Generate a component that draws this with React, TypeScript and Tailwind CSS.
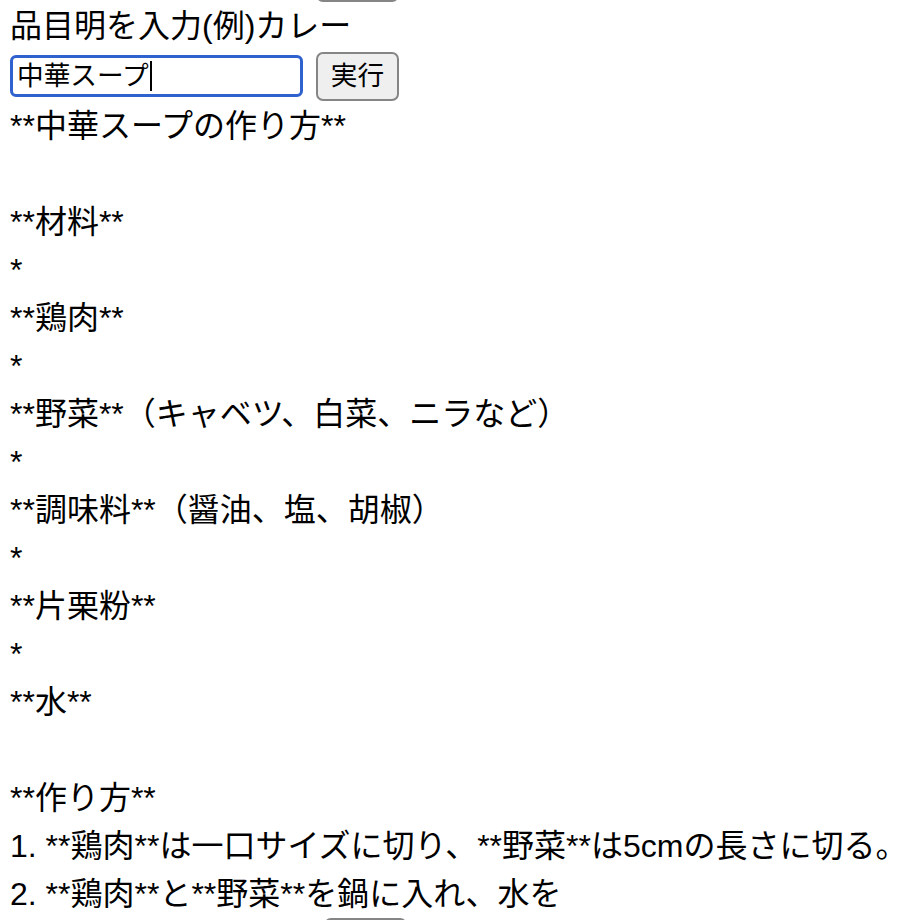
import React from "react";

const FONT = {
  fontFamily: '"Liberation Sans", "Noto Sans CJK JP", sans-serif',
};

const lines: string[] = [
  "**中華スープの作り方**",
  "",
  "**材料**",
  "*",
  "**鶏肉**",
  "*",
  "**野菜**（キャベツ、白菜、ニラなど）",
  "*",
  "**調味料**（醤油、塩、胡椒）",
  "*",
  "**片栗粉**",
  "*",
  "**水**",
  "",
  "**作り方**",
  "1. **鶏肉**は一口サイズに切り、**野菜**は5cmの長さに切る。",
  "2. **鶏肉**と**野菜**を鍋に入れ、水を",
];

function RunButton({ label }: { label?: string }) {
  return (
    <button
      type="button"
      aria-label="実行"
      className="h-[49px] w-[83px] shrink-0 rounded-[7px] border-2 border-[#858585] bg-[#efefef] text-[26.67px] leading-none text-black"
    >
      {label}
    </button>
  );
}

export default function App() {
  return (
    <div
      className="min-h-[920px] bg-white pl-[10px] text-[32px] leading-[48px] text-black"
      style={FONT}
    >
      {/* tail of the previous form, scrolled off the top */}
      <div className="-mt-[49px] flex h-[51px] items-end pl-[306px]">
        <RunButton />
      </div>

      <p>品目明を入力(例)カレー</p>

      <div className="flex h-[52px] items-center gap-[13px]">
        <div
          role="textbox"
          className="flex h-[42px] w-[293px] items-center rounded-[6px] border-[3px] border-[#2f62cf] bg-white pl-[4px] text-[26.67px] leading-none"
        >
          <span>中華スープ</span>
          <span className="ml-px h-[30px] w-[2px] bg-black" />
        </div>
        <RunButton label="実行" />
      </div>

      <div>
        {lines.map((line, i) => (
          <p key={i} className="whitespace-pre">
            {line === "" ? "\u00a0" : line}
          </p>
        ))}
      </div>

      {/* start of the next form, below the fold */}
      <div className="flex h-[52px] items-start gap-[21px]">
        <div className="w-[293px]" />
        <RunButton />
      </div>
    </div>
  );
}
